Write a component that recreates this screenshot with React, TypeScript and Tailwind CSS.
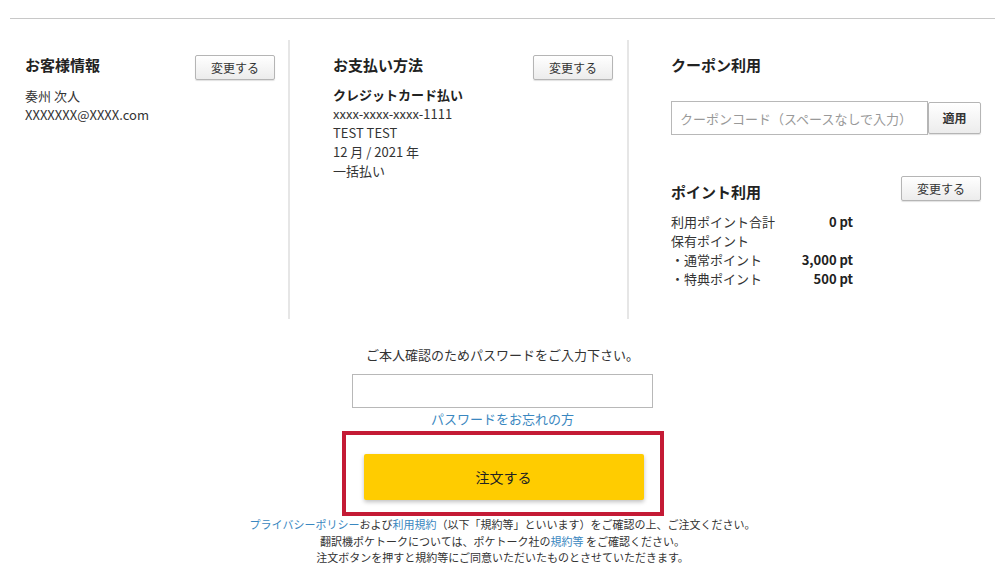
const font = "font-['Noto_Sans_CJK_JP','Noto_Sans',sans-serif]";

function ChangeButton({ label = "変更する" }: { label?: string }) {
  return (
    <button className="h-[25px] w-[80px] shrink-0 rounded-[2px] border border-[#b5b5b5] bg-gradient-to-b from-white to-[#ececec] text-[12px] leading-none text-[#333] shadow-[0_1px_1px_rgba(0,0,0,0.12)]">
      {label}
    </button>
  );
}

function SectionHeader({ title, action = true, offset = "" }: { title: string; action?: boolean; offset?: string }) {
  return (
    <div className="flex h-[25px] items-start justify-between">
      <h2 className={`text-[15px] font-bold leading-[20px] text-[#222] ${offset}`}>{title}</h2>
      {action && <ChangeButton />}
    </div>
  );
}

const points = [
  { label: "利用ポイント合計", value: "0 pt" },
  { label: "保有ポイント", value: "" },
  { label: "・通常ポイント", value: "3,000 pt" },
  { label: "・特典ポイント", value: "500 pt" },
];

export default function App() {
  return (
    <div className={`${font} min-h-[583px] bg-white text-[#333]`}>
      <div className="ml-[10px] w-[985px] pt-[18px]">
        <div className="border-t border-[#c8c8c8]" />

        <div className="mt-[21px] flex h-[279px]">
          {/* customer */}
          <section className="w-[278px] pl-[15px] pr-[13px] pt-[15px]">
            <SectionHeader title="お客様情報" />
            <div className="mt-[6px] text-[13px] leading-[19px]">
              <p>奏州 次人</p>
              <p>XXXXXXX@XXXX.com</p>
            </div>
          </section>

          {/* payment */}
          <section className="w-[339px] border-l-2 border-[#e6e6e6] pl-[43px] pr-[14px] pt-[15px]">
            <SectionHeader title="お支払い方法" />
            <div className="mt-[5px] text-[13px] leading-[19px]">
              <p className="font-bold text-[#222]">クレジットカード払い</p>
              <p>xxxx-xxxx-xxxx-1111</p>
              <p>TEST TEST</p>
              <p>12 月 / 2021 年</p>
              <p>一括払い</p>
            </div>
          </section>

          {/* coupon / points */}
          <section className="flex-1 border-l-2 border-[#e6e6e6] pl-[42px] pr-[14px] pt-[15px]">
            <SectionHeader title="クーポン利用" action={false} />
            <div className="mt-[21px] flex">
              <input
                placeholder="クーポンコード（スペースなしで入力）"
                className="h-[34px] w-[257px] border border-[#b8b8b8] px-[8px] text-[13px] text-[#333] outline-none placeholder:text-[#999]"
              />
              <button className="mt-px h-[32px] w-[53px] rounded-[2px] border border-[#b5b5b5] bg-gradient-to-b from-white to-[#ececec] text-[12px] font-bold text-[#333] shadow-[0_1px_1px_rgba(0,0,0,0.12)]">
                適用
              </button>
            </div>

            <div className="mt-[41px]">
              <SectionHeader title="ポイント利用" offset="mt-[6px]" />
            </div>
            <div className="mt-[11px] w-[182px] text-[13px] leading-[19px]">
              {points.map((p) => (
                <div key={p.label} className="flex justify-between">
                  <span>{p.label}</span>
                  <span className="font-bold text-[#222]">{p.value}</span>
                </div>
              ))}
            </div>
          </section>
        </div>

        <div className="mt-[26px] flex flex-col items-center">
          <p className="text-[13px] leading-[20px]">ご本人確認のためパスワードをご入力下さい。</p>
          <input
            type="password"
            className="mt-[9px] h-[34px] w-[301px] border border-[#b8b8b8] outline-none"
          />
          <a className="mt-[1px] text-[13px] leading-[20px] text-[#3a87c0]">パスワードをお忘れの方</a>

          <div className="mt-[2px] h-[85px] w-[322px] border-4 border-[#c41a35] px-[18px] pt-[19px]">
            <button className="h-[46px] w-[280px] rounded-[2px] bg-[#ffcc00] text-[14px] text-[#222] shadow-[0_2px_4px_rgba(0,0,0,0.25)]">
              注文する
            </button>
          </div>

          <div className="text-center text-[11px] leading-[16.5px] text-[#333]">
            <p>
              <a className="text-[#3a87c0]">プライバシーポリシー</a>および
              <a className="text-[#3a87c0]">利用規約</a>（以下「規約等」といいます）をご確認の上、ご注文ください。
            </p>
            <p>
              翻訳機ポケトークについては、ポケトーク社の<a className="text-[#3a87c0]">規約等</a> をご確認ください。
            </p>
            <p>注文ボタンを押すと規約等にご同意いただいたものとさせていただきます。</p>
          </div>
        </div>
      </div>
    </div>
  );
}
